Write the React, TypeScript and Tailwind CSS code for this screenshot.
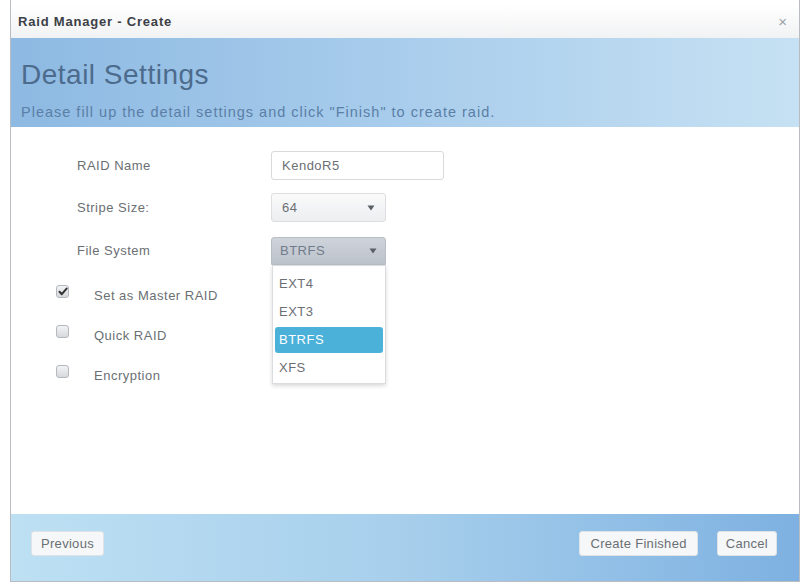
const FONT = "font-['Liberation_Sans','Arial',sans-serif]";

function Caret() {
  return (
    <svg width="8" height="6" viewBox="0 0 8 6" className="shrink-0">
      <path d="M0.5 0.5h7L4 5.5z" fill="#5a5f66" />
    </svg>
  );
}

function Checkbox({ checked }: { checked?: boolean }) {
  return (
    <span className="flex h-[13px] w-[13px] items-center justify-center rounded-[3px] border border-[#b4b8bd] bg-gradient-to-b from-[#f2f3f4] to-[#d6d9dc]">
      {checked && (
        <svg width="10" height="9" viewBox="0 0 10 9">
          <path d="M1.5 4.8l2.3 2.4L8.6 1.6" stroke="#333" strokeWidth="2" fill="none" strokeLinecap="round" strokeLinejoin="round" />
        </svg>
      )}
    </span>
  );
}

const OPTIONS = ["EXT4", "EXT3", "BTRFS", "XFS"];

export default function App() {
  return (
    <div className={`h-[587px] w-[804px] bg-white ${FONT}`}>
      <div className="ml-[10px] flex h-[582px] w-[790px] flex-col border-l border-r border-b border-[#b9bcc0] pt-[5px]">
        {/* title bar */}
        <div className="flex h-[33px] items-center justify-between bg-gradient-to-b from-white to-[#f1f2f3] pl-[7px] pr-[12px]">
          <span className="text-[13px] font-bold tracking-[0.8px] text-[#3c4046]">Raid Manager - Create</span>
          <span className="text-[15px] leading-none text-[#9aa0a6]">×</span>
        </div>

        {/* header */}
        <div className="flex h-[89px] flex-col bg-gradient-to-r from-[#8db9e2] via-[#a9cdec] to-[#c6e1f3] pl-[10px] pt-[21px]">
          <h1 className="text-[28px] leading-[32px] tracking-[0.5px] text-[#4d6b8c]">Detail Settings</h1>
          <p className="mt-[11px] text-[14.5px] tracking-[1px] text-[#5b7fa6]">
            Please fill up the detail settings and click "Finish" to create raid.
          </p>
        </div>

        {/* body */}
        <div className="flex-1 bg-white pl-[66px] pt-[24px] text-[13px] tracking-[0.5px] text-[#6b6f74]">
          <div className="flex h-[29px] items-center">
            <span className="w-[194px]">RAID Name</span>
            <div className="flex h-[29px] w-[173px] items-center rounded-[3px] border border-[#d8dadd] bg-white px-[10px] text-[#6b6f74]">
              KendoR5
            </div>
          </div>
          <div className="mt-[13px] flex h-[29px] items-center">
            <span className="w-[194px]">Stripe Size:</span>
            <div className="flex h-[29px] w-[115px] items-center justify-between rounded-[3px] border border-[#dcdee1] bg-gradient-to-b from-[#fafafa] to-[#eceef0] px-[10px]">
              <span>64</span>
              <Caret />
            </div>
          </div>
          <div className="mt-[15px] flex h-[28px] items-center">
            <span className="w-[194px]">File System</span>
            <div className="relative">
              <div className="flex h-[28px] w-[115px] items-center justify-between rounded-t-[3px] border border-[#b9bec6] bg-gradient-to-b from-[#cfd3da] to-[#bcc2cb] px-[8px] text-[#707c8c]">
                <span>BTRFS</span>
                <Caret />
              </div>
              <ul className="absolute left-[1px] top-full z-10 flex w-[114px] flex-col border border-[#dadcdf] bg-white pb-[1px] pt-[4px] shadow-[0_2px_4px_rgba(0,0,0,0.15)]">
                {OPTIONS.map((o) => (
                  <li
                    key={o}
                    className={
                      o === "BTRFS"
                        ? "mx-[2px] my-[1px] flex h-[26px] items-center rounded-[3px] bg-[#4bb1d9] px-[4px] text-white"
                        : "flex h-[28px] items-center px-[6px] text-[#6b6f74]"
                    }
                  >
                    {o}
                  </li>
                ))}
              </ul>
            </div>
          </div>

          <div className="-ml-[21px] mt-[20px] flex flex-col gap-[27px]">
            {[
              { label: "Set as Master RAID", checked: true },
              { label: "Quick RAID" },
              { label: "Encryption" },
            ].map((c) => (
              <div key={c.label} className="flex h-[13px] items-center">
                <Checkbox checked={c.checked} />
                <span className="ml-[25px] translate-y-[4px]">{c.label}</span>
              </div>
            ))}
          </div>
        </div>

        {/* footer */}
        <div className="flex h-[67px] items-start justify-between bg-gradient-to-r from-[#bde0f3] via-[#a7cfec] to-[#7eb1e1] pl-[20px] pr-[22px] pt-[17px] text-[13px] tracking-[0.3px] text-[#6b6f74]">
          <button className="h-[25px] rounded-[3px] border border-[#dfe3e6] bg-[#f5f7f8] px-[9px]">Previous</button>
          <div className="flex gap-[19px]">
            <button className="h-[25px] rounded-[3px] border border-[#dfe3e6] bg-[#f5f7f8] px-[10px]">Create Finished</button>
            <button className="h-[25px] rounded-[3px] border border-[#dfe3e6] bg-[#f5f7f8] px-[8px]">Cancel</button>
          </div>
        </div>
      </div>
    </div>
  );
}
